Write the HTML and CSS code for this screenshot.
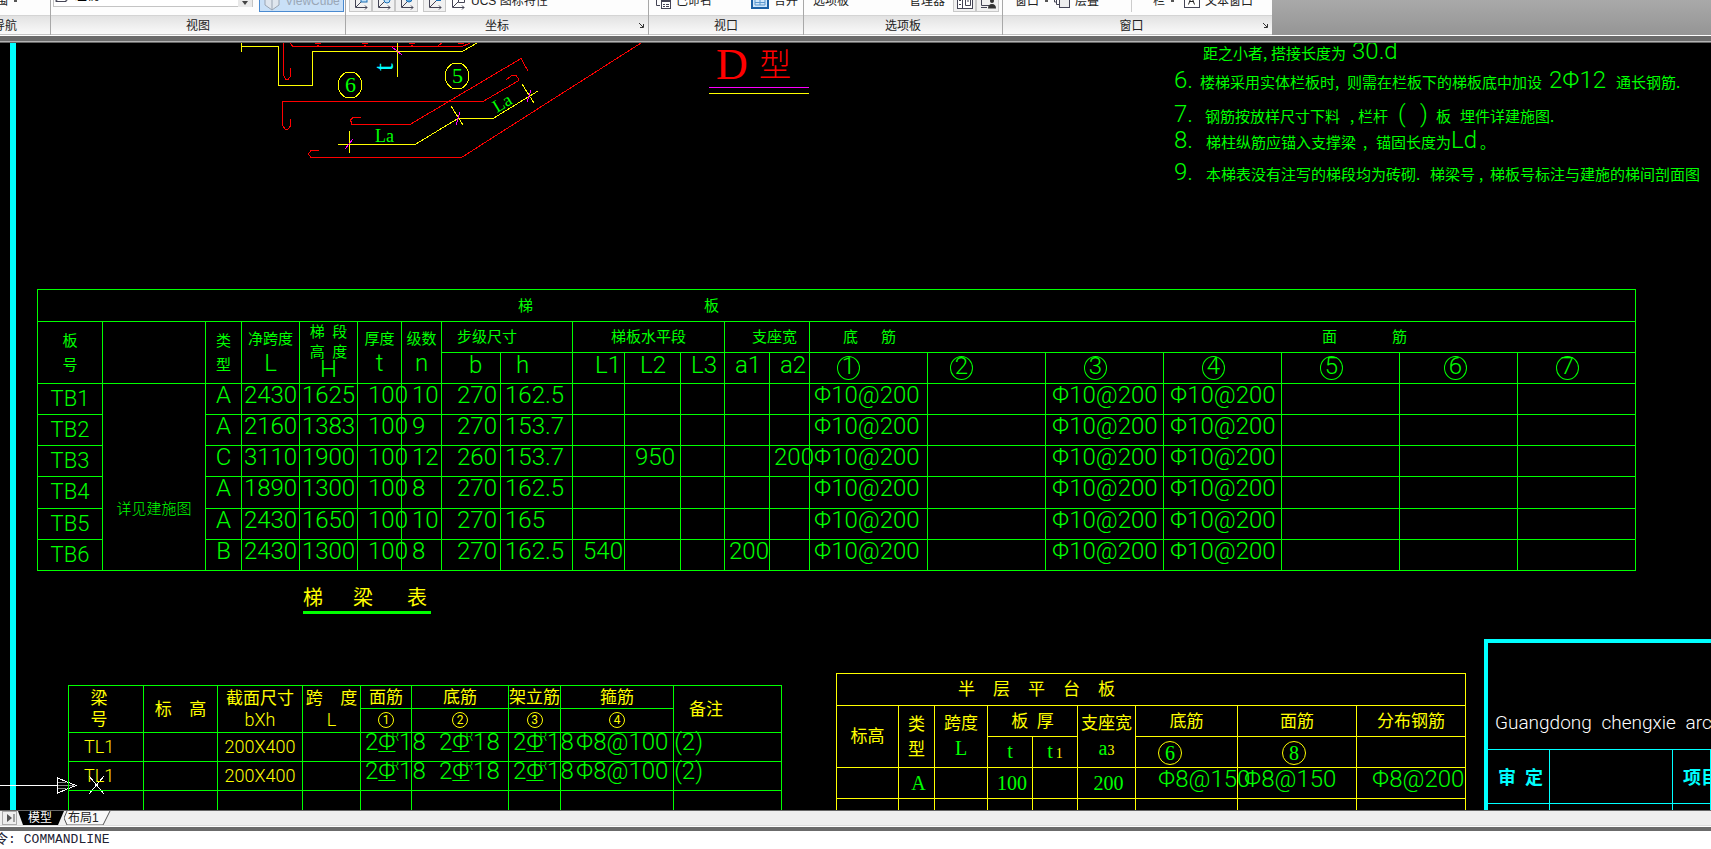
FILE: index.html
```
<!DOCTYPE html>
<html lang="zh-CN">
<head>
<meta charset="utf-8">
<title>CAD</title>
<link rel="stylesheet" href="styles.css">
</head>
<body>
<header class="ribbon">
  <section class="panel panel-nav">
    <div class="tools"><span class="tool range">范围</span><span class="tick"></span></div>
    <h2>导航</h2>
  </section>
  <section class="panel panel-view">
    <div class="tools">
      <label class="view-select">
        <svg width="18" height="16" viewBox="0 0 18 16"><path d="M2 14.500L7 8H17L12 14.500ZM2 14.500V8L7 1M12 14.500V11L17 5" fill="none" stroke="#445"/></svg>
        <select aria-label="视图"><option>左视</option></select>
        <svg class="arrow" width="14" height="20" viewBox="0 0 14 20"><rect width="14" height="20" fill="#e9e9e9"/><path d="M4 14H10L7 18Z" fill="#444"/></svg>
      </label>
      <button class="tool cube">
        <svg width="18" height="22" viewBox="0 0 18 22"><path d="M2 5L9 2L16 5V15L9 20L2 15ZM9 9V20M2 5L9 9L16 5" fill="#dfe6ee" stroke="#9aa5b3"/></svg>ViewCube</button>
    </div>
    <h2>视图</h2>
  </section>
  <section class="panel panel-ucs">
    <div class="tools">
      <button class="tool icon" aria-label="UCS 世界"><svg width="16" height="20" viewBox="0 0 16 20"><path d="M2.500 2V16.500H14M3 16L9 10M12 14.500L14 16.500L12 18.500" fill="none" stroke="#445"/><rect x="8" y="6" width="6" height="5" fill="#bfe0f8" stroke="#1a6fb5"/></svg></button>
      <button class="tool icon" aria-label="UCS 上一个"><svg width="16" height="20" viewBox="0 0 16 20"><path d="M2.500 2V16.500H14M3 16L9 10M12 14.500L14 16.500L12 18.500" fill="none" stroke="#445"/><path d="M8 6H14V9A3 3 0 0 1 8 9Z" fill="#bfe0f8" stroke="#1a6fb5"/></svg></button>
      <button class="tool icon" aria-label="UCS 视图"><svg width="16" height="20" viewBox="0 0 16 20"><path d="M2.500 2V16.500H14M3 16L9 10M12 14.500L14 16.500L12 18.500" fill="none" stroke="#445"/><circle cx="10" cy="8" r="3" fill="#5aa7de" stroke="#1a6fb5"/></svg></button>
      <button class="tool icon apart" aria-label="UCS 原点"><svg width="16" height="20" viewBox="0 0 16 20"><path d="M2.500 2V16.500H14M3 16L9 10M12 14.500L14 16.500L12 18.500" fill="none" stroke="#445"/><rect x="9" y="7" width="5" height="3" fill="#1a6fb5"/></svg></button>
      <button class="tool plain"><svg width="16" height="20" viewBox="0 0 16 20"><path d="M2.500 2V16.500H14M3 16L9 10M12 14.500L14 16.500L12 18.500M8.500 5V11.500H14.500V5" fill="none" stroke="#445"/></svg>UCS 图标特性</button>
    </div>
    <h2>坐标</h2><svg class="launch" width="5" height="5" viewBox="0 0 5 5"><path d="M0 0L4 4M4.500 1V4.500H1" fill="none" stroke="#333"/></svg>
  </section>
  <section class="panel panel-port">
    <div class="tools">
      <button class="tool plain"><svg width="16" height="20" viewBox="0 0 16 20"><path d="M1.500 3V14.500H5M5.500 3V9" fill="none" stroke="#445"/><rect x="6.500" y="9.500" width="9" height="8" fill="#fff" stroke="#445"/><path d="M7 10.500H15M8 13.500H10M11 13.500H14M8 15.500H10M11 15.500H14" stroke="#445"/></svg>已命名</button>
      <button class="tool plain merge"><svg width="18" height="20" viewBox="0 0 18 20"><rect x="1" y="3" width="16" height="14" fill="#cfe6fa" stroke="#1a5fa5" stroke-width="2"/><path d="M4 11.500H14M4 8V14H14V8M9 8V14" stroke="#5a97cf" fill="none"/></svg>合并</button>
    </div>
    <h2>视口</h2>
  </section>
  <section class="panel panel-palette">
    <div class="tools">
      <button class="tool plain">选项板</button>
      <button class="tool plain manager">管理器</button>
      <button class="tool icon" aria-label="工具选项板"><svg width="16" height="20" viewBox="0 0 16 20"><rect x=".5" y="1.500" width="15" height="16" fill="#fff" stroke="#445"/><path d="M5.500 2V17M2 5.500H4M2 9.500H4M2 13.500H4" stroke="#445"/><path d="M8.500 8.500H13.500V14.500H8.500ZM11 8V11" fill="none" stroke="#445"/></svg></button>
      <button class="tool icon" aria-label="设计中心"><svg width="16" height="20" viewBox="0 0 16 20"><path d="M1.500 1V14.500H9M1 16.500H7" fill="none" stroke="#445"/><circle cx="12" cy="10" r="2" fill="#333"/><path d="M8 17.500Q8 13 12 13T16 17.500Z" fill="#333"/></svg></button>
    </div>
    <h2>选项板</h2>
  </section>
  <section class="panel panel-window">
    <div class="tools">
      <button class="tool plain">窗口</button><span class="tick"></span>
      <button class="tool plain cascade"><svg width="16" height="20" viewBox="0 0 16 20"><path d="M.5 2V11H3M2.500 4V13.500H5" fill="none" stroke="#445"/><rect x="5.500" y="7.500" width="10" height="9" fill="#eee" stroke="#445"/><path d="M6 8.500H15" stroke="#445"/></svg>层叠</button>
      <span class="split"></span>
      <button class="tool plain">栏</button><span class="tick"></span>
      <button class="tool plain textwin"><svg width="16" height="20" viewBox="0 0 16 20"><rect x=".5" y="2.500" width="15" height="14" fill="#fff" stroke="#445"/><path d="M4.500 13.500L7.500 5.500L10.500 13.500M5.500 10.500H9.500" fill="none" stroke="#222"/></svg>文本窗口</button>
    </div>
    <h2>窗口</h2><svg class="launch" width="5" height="5" viewBox="0 0 5 5"><path d="M0 0L4 4M4.500 1V4.500H1" fill="none" stroke="#333"/></svg>
  </section>
</header>
<div class="frame-top"></div>

<main class="canvas">
  <svg class="drawing" width="100%" height="100%">
    <g transform="translate(0,-43)" fill="none" shape-rendering="crispEdges">
      <rect x="10" y="43" width="6" height="800" fill="#0ff"/>
      <g stroke="#f00">
        <path d="M283.500 43V75L285.500 79H288.500L290.500 76V68"/>
        <path d="M290 43L293 46.500H462L470 43M315 43.500H321M317 45.500H319M362 43.500H368M364 45.500H366M409 43.500H415M411 45.500H413M458 43.500H464M438 46L442 43"/>
        <path d="M506 80L512 75.500H516L518 78V81L483 101.500H282.500V125L285 129H288L290.500 126V119"/>
        <path d="M361 117.500H353L350.500 120L352 124.500H410L521 58.500L528 71"/>
        <path d="M319 150.500H311L308.500 154L311 157.500H461.500L641 43"/>
      </g>
      <g stroke="#ff0">
        <path d="M241.500 43V52M241 46.500H278.500V85.500H312.500V51.500H462L477 43M397.500 43V77"/>
        <path d="M338 144.500H415L458 118.500H493L538 91M349.500 131V153M451 106L463 125M522 84L534 103"/>
        <ellipse cx="350" cy="85" rx="12" ry="13"/>
        <ellipse cx="457" cy="76" rx="12" ry="13"/>
        <path d="M709 93.500H809"/>
      </g>
      <path d="M392 47L402 55M345 149L353 139M456 125L460 112M527 102L531 90M709 87.500H809" stroke="#f0f"/>
      <rect x="303" y="611" width="128" height="3" fill="#0f0"/>
      <path d="M0 785.500H57M57.500 778V793L76 785.500ZM89 776L104 794M104 776L89 794" stroke="#fff"/>
      <path d="M58 782.500H66M58 785.500H74M58 788.500H66" stroke="#888"/>
    </g>
    <g transform="translate(0,-43)">
      <g class="label">
        <text x="345" y="92">6</text>
        <text x="452" y="83">5</text>
        <text class="small" x="375" y="142">La</text>
        <text class="small" transform="translate(497,113) rotate(-31)">La</text>
        <text class="cyan" transform="translate(393,71) rotate(-90)">t</text>
      </g>
      <g class="heading"><text class="latin" x="716" y="79">D</text><text x="759" y="76">型</text></g>
      <g class="title"><text x="303" y="605">梯</text><text x="353" y="605">梁</text><text x="407" y="605">表</text></g>
      <g class="notes">
        <text y="59"><tspan x="1203">距之小者</tspan><tspan x="1263">,</tspan><tspan x="1271">搭接长度为</tspan><tspan class="num" x="1352">30.d</tspan></text>
        <text y="88"><tspan class="num" x="1174">6.</tspan><tspan x="1200">楼梯采用实体栏板时,</tspan><tspan x="1347">则需在栏板下的梯板底中加设</tspan><tspan class="num" x="1549">2Φ12</tspan><tspan x="1616">通长钢筋.</tspan></text>
        <text y="122"><tspan class="num" x="1174">7.</tspan><tspan x="1205">钢筋按放样尺寸下料</tspan><tspan x="1350">,</tspan><tspan x="1358">栏杆</tspan><tspan class="num" x="1398">(</tspan><tspan class="num" x="1420">)</tspan><tspan x="1436">板</tspan><tspan x="1460">埋件详建施图.</tspan></text>
        <text y="148"><tspan class="num" x="1174">8.</tspan><tspan x="1206">梯柱纵筋应锚入支撑梁</tspan><tspan x="1363">,</tspan><tspan x="1376">锚固长度为</tspan><tspan class="num" x="1451">Ld</tspan><tspan x="1480">。</tspan></text>
        <text y="180"><tspan class="num" x="1174">9.</tspan><tspan x="1206">本梯表没有注写的梯段均为砖砌.</tspan><tspan x="1430">梯梁号</tspan><tspan x="1479">,</tspan><tspan x="1490">梯板号标注与建施的梯间剖面图</tspan></text>
      </g>
    </g>
  </svg>

  <table class="sheet slabs">
    <colgroup><col class="w65"><col class="w103"><col class="w36"><col class="w58"><col class="w58"><col class="w44"><col class="w40"><col class="w59"><col class="w72"><col class="w52"><col class="w56"><col class="w44"><col class="w45"><col class="w40"><col class="w118"><col class="w118"><col class="w118"><col class="w118"><col class="w118"><col class="w118"><col class="w118"></colgroup>
    <thead>
    <tr class="tall"><th colspan="21"><div class="spread slab-title"><span>梯</span><span>板</span></div></th></tr>
    <tr>
      <th rowspan="2" class="two">板<br>号</th><th rowspan="2"></th><th rowspan="2" class="two">类<br>型</th>
      <th rowspan="2" class="two">净跨度<br><b>L</b></th>
      <th rowspan="2" class="three">梯&ensp;段<br>高&ensp;度<br><b>H</b></th>
      <th rowspan="2" class="two">厚度<br><b>t</b></th><th rowspan="2" class="two">级数<br><b>n</b></th>
      <th colspan="2" class="p15">步级尺寸</th><th colspan="3">梯板水平段</th><th colspan="2" class="p27">支座宽</th>
      <th colspan="2" class="open"><div class="spread bottom-bar"><span>底</span><span>筋</span></div></th>
      <th colspan="5"><div class="spread top-bar"><span>面</span><span>筋</span></div></th>
    </tr>
    <tr class="marks">
      <th class="p27">b</th><th class="p15">h</th><th class="p22">L1</th><th class="p15">L2</th><th class="p10">L3</th><th class="p10">a1</th><th class="p10">a2</th>
      <th class="p27"><i>1</i></th><th class="p22"><i>2</i></th><th class="p38"><i>3</i></th><th class="p38"><i>4</i></th><th class="p38"><i>5</i></th><th class="p44"><i>6</i></th><th class="p38"><i>7</i></th>
    </tr>
    </thead>
    <tbody>
    <tr><td class="name">TB1</td><td rowspan="6" class="see">详见建施图</td><td class="mid">A</td><td class="mid">2430</td><td class="mid">1625</td><td class="p10">100</td><td class="p10">10</td><td class="p15">270</td><td>162.5</td><td></td><td></td><td></td><td></td><td></td><td>Φ10@200</td><td></td><td class="p6">Φ10@200</td><td class="p6">Φ10@200</td><td></td><td></td><td></td></tr>
    <tr><td class="name">TB2</td><td class="mid">A</td><td class="mid">2160</td><td class="mid">1383</td><td class="p10">100</td><td class="p10">9</td><td class="p15">270</td><td>153.7</td><td></td><td></td><td></td><td></td><td></td><td>Φ10@200</td><td></td><td class="p6">Φ10@200</td><td class="p6">Φ10@200</td><td></td><td></td><td></td></tr>
    <tr><td class="name">TB3</td><td class="mid">C</td><td class="mid">3110</td><td class="mid">1900</td><td class="p10">100</td><td class="p10">12</td><td class="p15">260</td><td>153.7</td><td></td><td class="p10">950</td><td></td><td></td><td>200</td><td>Φ10@200</td><td></td><td class="p6">Φ10@200</td><td class="p6">Φ10@200</td><td></td><td></td><td></td></tr>
    <tr class="tall"><td class="name">TB4</td><td class="mid">A</td><td class="mid">1890</td><td class="mid">1300</td><td class="p10">100</td><td class="p10">8</td><td class="p15">270</td><td>162.5</td><td></td><td></td><td></td><td></td><td></td><td>Φ10@200</td><td></td><td class="p6">Φ10@200</td><td class="p6">Φ10@200</td><td></td><td></td><td></td></tr>
    <tr><td class="name">TB5</td><td class="mid">A</td><td class="mid">2430</td><td class="mid">1650</td><td class="p10">100</td><td class="p10">10</td><td class="p15">270</td><td>165</td><td></td><td></td><td></td><td></td><td></td><td>Φ10@200</td><td></td><td class="p6">Φ10@200</td><td class="p6">Φ10@200</td><td></td><td></td><td></td></tr>
    <tr><td class="name">TB6</td><td class="mid">B</td><td class="mid">2430</td><td class="mid">1300</td><td class="p10">100</td><td class="p10">8</td><td class="p15">270</td><td>162.5</td><td class="p10">540</td><td></td><td></td><td>200</td><td></td><td>Φ10@200</td><td></td><td class="p6">Φ10@200</td><td class="p6">Φ10@200</td><td></td><td></td><td></td></tr>
    </tbody>
  </table>

  <table class="sheet beams">
    <colgroup><col class="w75"><col class="w74"><col class="w85"><col class="w58"><col class="w51"><col class="w97"><col class="w52"><col class="w113"><col class="w108"></colgroup>
    <thead>
    <tr class="r23"><th rowspan="2" class="mark-col">梁<br>号</th><th rowspan="2">标&ensp;&ensp;高</th><th rowspan="2">截面尺寸<br><b>bXh</b></th><th rowspan="2">跨&ensp;&ensp;度<br><b>L</b></th><th>面筋</th><th>底筋</th><th>架立筋</th><th>箍筋</th><th rowspan="2" class="p15">备注</th></tr>
    <tr class="r24"><th><i>1</i></th><th><i>2</i></th><th><i>3</i></th><th><i>4</i></th></tr>
    </thead>
    <tbody>
    <tr><td class="name p15">TL1</td><td></td><td class="name mid">200X400</td><td></td><td>2<u>Φ</u><sup>R</sup>18</td><td class="p27">2<u>Φ</u><sup>R</sup>18</td><td>2<u>Φ</u><sup>R</sup>18</td><td class="p15">Φ8@100 (2)</td><td></td></tr>
    <tr><td class="name p15">TL1</td><td></td><td class="name mid">200X400</td><td></td><td>2<u>Φ</u><sup>R</sup>18</td><td class="p27">2<u>Φ</u><sup>R</sup>18</td><td>2<u>Φ</u><sup>R</sup>18</td><td class="p15">Φ8@100 (2)</td><td></td></tr>
    <tr><td></td><td></td><td></td><td></td><td></td><td></td><td></td><td></td><td></td></tr>
    </tbody>
  </table>

  <table class="sheet landing">
    <colgroup><col class="w62"><col class="w36"><col class="w53"><col class="w45"><col class="w45"><col class="w58"><col class="w102"><col class="w119"><col class="w109"></colgroup>
    <thead>
    <tr class="tall"><th colspan="9"><div class="spread landing-title"><span>半</span><span>层</span><span>平</span><span>台</span><span>板</span></div></th></tr>
    <tr><th rowspan="2">标高</th><th rowspan="2">类<br>型</th><th rowspan="2">跨度<br><b>L</b></th><th colspan="2">板&ensp;厚</th><th rowspan="2">支座宽<br><b>a<small>3</small></b></th><th>底筋</th><th>面筋</th><th>分布钢筋</th></tr>
    <tr><th><b>t</b></th><th><b>t<small>&thinsp;1</small></b></th><th class="p22"><i>6</i></th><th class="p44"><i>8</i></th><th></th></tr>
    </thead>
    <tbody>
    <tr><td></td><td class="serif">A</td><td></td><td class="serif">100</td><td></td><td class="serif">200</td><td class="p22">Φ8@150</td><td class="p6">Φ8@150</td><td class="p15">Φ8@200</td></tr>
    <tr><td></td><td></td><td></td><td></td><td></td><td></td><td></td><td></td><td></td></tr>
    </tbody>
  </table>

  <section class="title-block">
    <p>Guangdong&ensp;chengxie&ensp;architectural</p>
    <div class="cells"><span>审&ensp;定</span><span></span><span>项目</span></div>
    <div class="cells next"><span></span><span></span><span></span></div>
  </section>
</main>

<nav class="tabs">
  <button class="end" aria-label="最后"><svg width="16" height="15" viewBox="0 0 16 15"><rect x=".5" y=".5" width="14" height="13" fill="#eee" stroke="#aaa"/><path d="M5 3L10 7L5 11Z" fill="#555"/><path d="M12 3V11" stroke="#555"/></svg></button>
  <button class="tab active"><svg width="46" height="15" viewBox="0 0 46 15"><path d="M0 0H46L40 14H5Z"/></svg><span>模型</span></button>
  <button class="tab"><svg width="50" height="15" viewBox="0 0 50 15"><path d="M3 0L0 7L3 14H39L46 0" fill="#f8f8f8" stroke="#555"/></svg><span>布局1</span></button>
</nav>
<div class="frame-bottom"></div>
<div class="command"><label for="cmd">命令:</label><input id="cmd" value="COMMANDLINE"></div>
</body>
</html>
```
FILE: styles.css
```
* { box-sizing: border-box; }
body {
  margin: 0; height: 100vh; overflow: hidden; display: flex; flex-direction: column;
  background: #fff; color: #222;
  font: 12px/16px "Liberation Sans", "Noto Sans CJK SC", sans-serif;
}
button { font: inherit; color: inherit; margin: 0; padding: 0; border: 0; background: none; }

/* ribbon */
.ribbon { display: flex; height: 35px; flex: none; background: linear-gradient(#a9a9a9, #959595); }
.panel { position: relative; flex: none; background: #fdfdfd; border-right: 1px solid #a8a8a8; overflow: hidden; }
.panel-nav { width: 51px; }
.panel-view { width: 295px; }
.panel-ucs { width: 303px; }
.panel-port { width: 155px; }
.panel-palette { width: 199px; }
.panel-window { width: 269px; border-right: 0; }
.tools { height: 15px; display: flex; align-items: flex-end; padding-bottom: 3px; }
.panel h2 {
  margin: 0; height: 20px; padding-top: 2px; border-top: 1px solid #d4d4d4; border-bottom: 1px solid #c4c4c4;
  background: linear-gradient(#e2e2e2, #fafafa); font-size: 12px; line-height: 16px; font-weight: 400; text-align: center;
}
.panel-nav h2 { text-align: left; text-indent: -7px; }
.panel-window h2 { padding-right: 12px; }
.launch { position: absolute; right: 4px; bottom: 7px; }
.tool { height: 22px; flex: none; display: flex; align-items: center; justify-content: center; white-space: nowrap; }
.range { margin-left: -16px; }
.tick { width: 3px; height: 2px; margin: 0 0 10px 6px; background: #555; }
.icon { width: 23px; border: 1px solid #c8c8c8; border-top: 0; background: #f1f1f1; }
.plain { gap: 5px; }
.view-select { position: relative; display: flex; align-items: center; width: 200px; height: 20px; margin: 0 6px 5px 2px; border: 1px solid #c4c4c4; background: #fff; }
.view-select select { flex: 1; appearance: none; border: 0; padding: 0 0 2px 3px; background: none; font: inherit; }
.view-select svg { margin-bottom: 5px; }
.view-select .arrow { margin: 0; }
.cube { width: 85px; gap: 4px; border: 1px solid #4a8ad0; background: #c9e0f7; color: #9aa7b6; }
.panel-ucs .tools { padding-left: 3px; }
.apart { margin: 0 4px 0 5px; }
.panel-port .tools { padding-left: 6px; }
.merge { margin-left: 39px; }
.panel-palette .tools { padding-left: 9px; }
.manager { margin: 0 8px 0 60px; }
.panel-window .tools { padding-left: 12px; }
.cascade { margin: 0 32px 0 6px; }
.split { width: 1px; height: 16px; margin-right: 21px; background: #ccc; }
.textwin { margin-left: 10px; }
.frame-top { flex: none; height: 8px; background: linear-gradient(#fff 1px, #6b6b6b 1px 6px, #b4b4b4 6px 7px, #666 7px); }

/* model space */
.canvas { position: relative; flex: 1; overflow: hidden; background: #000; }
.drawing { position: absolute; inset: 0; }
.label { font: 22px "Liberation Serif", serif; fill: #0f0; }
.label .small { font-size: 18px; }
.label .cyan { font-size: 28px; fill: #0ff; }
.heading { font: 32px "Noto Sans CJK SC", sans-serif; font-weight: 300; fill: #f00; }
.heading .latin { font: 44px "Liberation Serif", serif; }
.title { font: 20px "Noto Sans CJK SC", sans-serif; fill: #ff0; }
.notes { font: 15px "Noto Sans CJK SC", sans-serif; fill: #0f0; }
.notes .num { font: 24px Roboto, sans-serif; font-weight: 300; }

/* schedules */
.sheet {
  position: absolute; table-layout: fixed; border-spacing: 0; color: #0f0;
  border-top: 1px solid; border-left: 1px solid; font-family: Roboto, "Noto Sans CJK SC", sans-serif; font-weight: 300;
}
.w36 { width: 36px; }
.w40 { width: 40px; }
.w44 { width: 44px; }
.w45 { width: 45px; }
.w51 { width: 51px; }
.w52 { width: 52px; }
.w53 { width: 53px; }
.w56 { width: 56px; }
.w58 { width: 58px; }
.w59 { width: 59px; }
.w62 { width: 62px; }
.w65 { width: 65px; }
.w72 { width: 72px; }
.w74 { width: 74px; }
.w75 { width: 75px; }
.w85 { width: 85px; }
.w97 { width: 97px; }
.w102 { width: 102px; }
.w103 { width: 103px; }
.w108 { width: 108px; }
.w109 { width: 109px; }
.w113 { width: 113px; }
.w118 { width: 118px; }
.w119 { width: 119px; }
.sheet th, .sheet td { padding: 0; border: solid; border-width: 0 1px 1px 0; white-space: nowrap; }
.sheet th { font-weight: 400; }
.sheet td { font-size: 24px; line-height: 23px; vertical-align: top; padding-left: 4px; }
.sheet b { font-weight: 300; }
.sheet i { display: inline-block; border: 1px solid; border-radius: 50%; font-style: normal; text-align: center; }
.sheet tr { height: 31px; }
.sheet .tall { height: 32px; }
.sheet .mid { text-align: center; padding-left: 0; }
.sheet .p6 { padding-left: 6px; text-align: left; }
.sheet .p10 { padding-left: 10px; text-align: left; }
.sheet .p15 { padding-left: 15px; text-align: left; }
.sheet .p22 { padding-left: 22px; text-align: left; }
.sheet .p27 { padding-left: 27px; text-align: left; }
.sheet .p38 { padding-left: 38px; text-align: left; }
.sheet .p44 { padding-left: 44px; text-align: left; }
.spread { display: flex; }

.slabs { left: 37px; top: 246px; width: 1599px; }
.slabs th { font-size: 15px; line-height: 24px; }
.slabs b { font-size: 24px; }
.slabs .three { line-height: 20px; vertical-align: top; }
.slabs .three b { line-height: 14px; }
.slabs .marks th { font-size: 24px; font-weight: 300; vertical-align: top; }
.slabs i { width: 23px; height: 24px; margin-top: 3px; line-height: 18px; vertical-align: top; }
.slabs .name { font-size: 22px; line-height: 30px; padding: 0; text-align: center; }
.slabs .see { font-size: 15px; text-align: center; padding: 114px 0 0; }
.slabs .open { border-right: 0; }
.slab-title { padding-left: 480px; gap: 171px; }
.bottom-bar { padding-left: 33px; gap: 23px; }
.top-bar { padding-left: 276px; gap: 55px; }

.beams { left: 68px; top: 642px; width: 714px; }
.beams th { color: #ff0; border-color: #0f0; font-size: 17px; line-height: 21px; }
.beams b { font-size: 18px; }
.beams i { width: 16px; height: 16px; margin-top: 2px; font-size: 12px; line-height: 14px; vertical-align: top; }
.beams tbody tr { height: 29px; }
.beams .r23 { height: 23px; }
.beams .r24 { height: 24px; }
.beams .mark-col { padding-right: 14px; }
.beams td { line-height: 18px; }
.beams .name { color: #ff0; border-color: #0f0; font-size: 18px; line-height: 28px; }
.beams u { text-underline-offset: 1px; text-decoration-thickness: 1px; }
.beams sup { font-size: 12px; line-height: 1px; margin-left: -4px; }

.landing { left: 836px; top: 630px; width: 630px; color: #ff0; }
.landing th { font-size: 17px; line-height: 25px; }
.landing b, .landing .serif { color: #0f0; font: 20px/25px "Liberation Serif", serif; }
.landing small { font-size: 14px; color: #ff0; }
.landing td { color: #0f0; border-color: #ff0; }
.landing .serif { border-color: #ff0; line-height: 30px; padding: 0 0 0 4px; text-align: center; }
.landing i { width: 24px; height: 24px; font: 20px/22px "Liberation Serif", serif; vertical-align: middle; border-color: #ff0; color: #0f0; }
.landing-title { padding-left: 121px; gap: 18px; }

.title-block { position: absolute; left: 1484px; right: 0; top: 596px; bottom: 0; border: solid #0ff; border-width: 4px 0 0 4px; overflow: hidden; color: #0ff; }
.title-block p { margin: 0; height: 106px; padding: 68px 0 0 7px; color: #fff; font: 300 19px/24px Roboto, sans-serif; white-space: nowrap; }
.cells { display: grid; grid-template-columns: 62px 123px 1fr; height: 54px; border-top: 1px solid; font: 700 18px/52px "Noto Sans CJK SC", sans-serif; }
.cells span { padding-left: 10px; border-right: 1px solid; white-space: nowrap; overflow: hidden; }

/* layout tabs and command line */
.tabs { flex: none; display: flex; height: 15px; border-top: 1px solid #666; background: #efefef; }
.end { width: 18px; padding-left: 2px; }
.end svg, .tab svg { display: block; }
.tab { display: grid; }
.tab svg, .tab span { grid-area: 1 / 1; }
.tab span { padding-left: 4px; line-height: 14px; text-align: left; }
.tab.active span { padding-left: 10px; color: #fff; }
.frame-bottom { flex: none; height: 6px; background: linear-gradient(#ddd 1px, #fff 1px 2px, #6b6b6b 2px); }
.command { flex: none; display: flex; align-items: center; gap: 8px; height: 18px; padding-bottom: 1px; font: 13px/16px "Liberation Mono", "Noto Sans CJK SC", monospace; color: #223; }
.command label { margin-left: -18px; }
.command input { flex: 1; border: 0; padding: 0; outline: 0; font: inherit; color: inherit; }
```
